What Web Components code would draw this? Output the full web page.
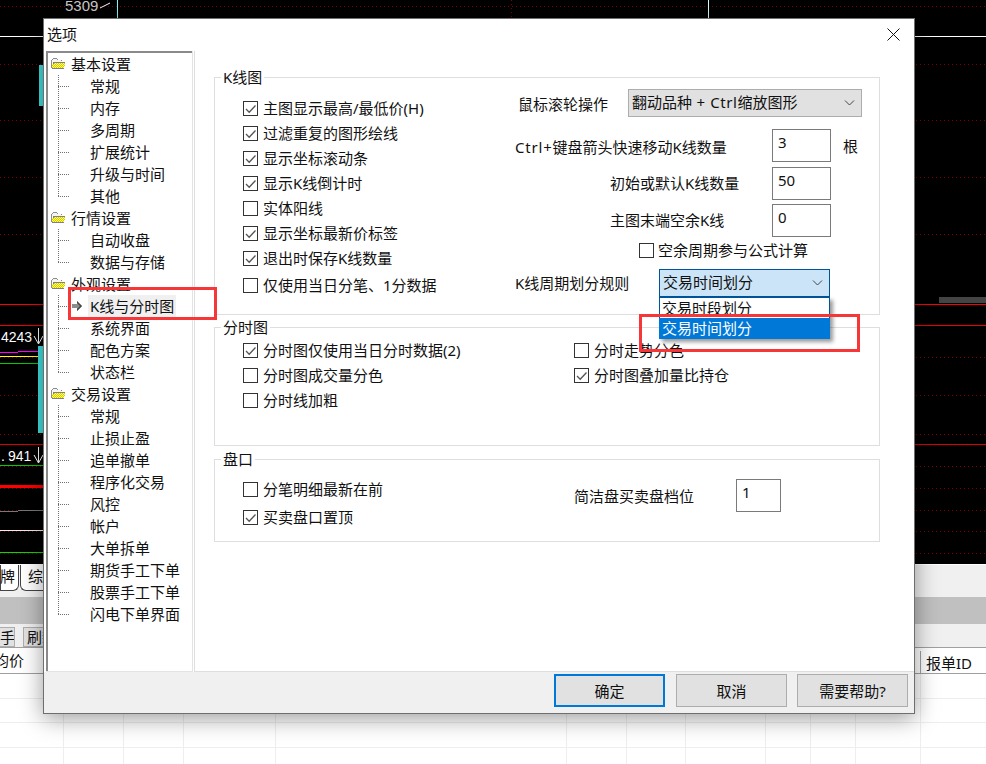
<!DOCTYPE html>
<html lang="zh">
<head>
<meta charset="utf-8">
<title>选项</title>
<style>
	html, body {
		margin: 0;
		height: 764px;
		overflow: hidden;
		background: #fff;
		color: #111;
		font: 15px/22px "Noto Sans", "Noto Sans CJK SC", sans-serif;
	}
</style>
</head>
<body>
<app-backdrop></app-backdrop>

<options-dialog>
	<tree-group label="基本设置">
		<tree-item>常规</tree-item>
		<tree-item>内存</tree-item>
		<tree-item>多周期</tree-item>
		<tree-item>扩展统计</tree-item>
		<tree-item>升级与时间</tree-item>
		<tree-item>其他</tree-item>
	</tree-group>
	<tree-group label="行情设置">
		<tree-item>自动收盘</tree-item>
		<tree-item>数据与存储</tree-item>
	</tree-group>
	<tree-group label="外观设置">
		<tree-item selected>K线与分时图</tree-item>
		<tree-item>系统界面</tree-item>
		<tree-item>配色方案</tree-item>
		<tree-item>状态栏</tree-item>
	</tree-group>
	<tree-group label="交易设置">
		<tree-item>常规</tree-item>
		<tree-item>止损止盈</tree-item>
		<tree-item>追单撤单</tree-item>
		<tree-item>程序化交易</tree-item>
		<tree-item>风控</tree-item>
		<tree-item>帐户</tree-item>
		<tree-item>大单拆单</tree-item>
		<tree-item>期货手工下单</tree-item>
		<tree-item>股票手工下单</tree-item>
		<tree-item>闪电下单界面</tree-item>
	</tree-group>

	<opt-group slot="pane" label="K线图" style="--h: 248px">
		<kline-options></kline-options>
	</opt-group>
	<opt-group slot="pane" label="分时图" style="--h: 129px; --gap: 2px">
		<div style="display: grid; grid-template-columns: 331px 1fr; grid-auto-rows: 25px; padding-top: 1px">
			<opt-check checked>分时图仅使用当日分时数据(2)</opt-check>
			<opt-check>分时走势分色</opt-check>
			<opt-check>分时图成交量分色</opt-check>
			<opt-check checked>分时图叠加量比持仓</opt-check>
			<opt-check>分时线加粗</opt-check>
		</div>
	</opt-group>
	<opt-group slot="pane" label="盘口" style="--h: 93px; --gap: 3px">
		<div style="display: flex; align-items: flex-start">
			<div style="width: 331px; display: grid; grid-auto-rows: 28px; padding-top: 8px">
				<opt-check>分笔明细最新在前</opt-check>
				<opt-check checked>买卖盘口置顶</opt-check>
			</div>
			<div style="display: flex; align-items: center; padding-top: 10px">
				<span style="width: 162px">简洁盘买卖盘档位</span>
				<num-box style="--w: 45px">1</num-box>
			</div>
		</div>
	</opt-group>

	<dlg-button slot="footer" primary>确定</dlg-button>
	<dlg-button slot="footer">取消</dlg-button>
	<dlg-button slot="footer">需要帮助?</dlg-button>
</options-dialog>

<mark-box style="--x: 68px; --y: 287px; --w: 149px; --h: 33px"></mark-box>
<mark-box style="--x: 639px; --y: 314px; --w: 221px; --h: 38px"></mark-box>

<script>
const CHEVRON = `<svg width="11" height="6" viewBox="0 0 11 6"><path d="M1 .5l4.5 4.5L10 .5" fill="none" stroke="#444" stroke-width="1"/></svg>`;

class AppBackdrop extends HTMLElement {
	constructor() {
		super();
		const dotted = [6, 64, 120, 177, 234, 357, 395, 434, 466, 488, 510, 531, 553];
		const solid = [
			[0, 986, 36, '#fff', 1], [0, 986, 304, '#f00', 1], [0, 986, 325, '#e00', 1], [0, 986, 444.5, '#d00', 1],
			[0, 18, 352, '#f0f', 1], [18, 44, 351, '#f0f', 1], [0, 44, 356.5, '#ff0', 1], [0, 44, 363.5, '#0c0', 1],
			[0, 44, 465, '#0c0', 1], [0, 44, 486.5, '#f00', 3], [0, 18, 511, '#777', 1], [18, 44, 510, '#777', 1],
			[0, 44, 530, '#eee', 1], [0, 44, 552.5, '#0d0', 1]
		];
		const gridX = [63, 123, 183, 275, 566, 626, 685, 765, 810, 855, 920];
		const gridY = [24, 48, 73];
		this.attachShadow({ mode: 'open' }).innerHTML = `
			<style>
				:host { display: block; height: 764px; }
				svg { display: block; }
				.tabs { display: flex; height: 33px; background: #f0f0f0; border-top: 1px solid #fff; box-sizing: border-box; overflow: hidden; }
				.tab { height: 25px; background: #fff; border: 1px solid #444; border-top: 0; border-radius: 0 0 6px 0; padding: 0 3px 0 0; text-indent: -1px; }
				.tab + .tab { margin-left: 1px; padding-left: 8px; border-radius: 0 0 0 6px; width: 40px; border-right: 0; }
				.bar { height: 27px; background: #c0c0c0; }
				.tools { display: flex; gap: 8px; height: 24px; padding-top: 3px; box-sizing: border-box; background: #f0f0f0; border-bottom: 1px solid #a0a0a0; }
				.tools span { height: 20px; line-height: 18px; width: 40px; background: #e1e1e1; border: 1px solid #adadad; box-sizing: border-box; padding-left: 3px; overflow: hidden; }
				.tools span:first-child { width: 15px; margin-left: 0; padding-left: 0; border-left: 0; }
				.head { display: flex; height: 26px; line-height: 25px; box-sizing: border-box; background: #fff; border-bottom: 1px solid #a0a0a0; }
				.head span:first-child { margin-left: -6px; width: 926px; }
				.head span:last-child { border-left: 1px solid #a0a0a0; height: 22px; line-height: 24px; margin-top: 3px; padding-left: 5px; }
			</style>
			<svg width="986" height="564" viewBox="0 0 986 564" shape-rendering="crispEdges">
				<rect width="986" height="564" fill="#000"/>
				${dotted.map(y => `<line x1="0" x2="986" y1="${y + .5}" y2="${y + .5}" stroke="#800000" stroke-dasharray="1 3"/>`).join('')}
				<line x1="511.5" x2="511.5" y1="0" y2="18" stroke="#800000" stroke-dasharray="1 3"/>
				${solid.map(([a, b, y, c, w]) => `<line x1="${a}" x2="${b}" y1="${y}" y2="${y}" stroke="${c}" stroke-width="${w}"/>`).join('')}
				<rect x="939" y="297" width="47" height="6" fill="#444"/>
				<rect x="39" y="65" width="5" height="41" fill="#40e0e0"/>
				<rect x="38" y="346" width="6" height="87" fill="#40e0e0"/>
				<line x1="117.5" x2="117.5" y1="0" y2="19" stroke="#7ff"/>
				<line x1="708.5" x2="708.5" y1="0" y2="19" stroke="#dff"/>
				<g font-family="Liberation Sans, sans-serif" font-size="14" fill="#fff">
					<text x="65" y="11" fill="#ccc" font-size="15">5309</text>
					<text x="1" y="342">4243</text>
					<text x="1" y="461">.</text>
					<text x="8" y="461">941</text>
				</g>
				<g shape-rendering="auto" fill="none" stroke="#fff">
					<path d="M100 8l10-5"/>
					<path d="M38.500 328v16M34 336l4.500 8 4.500-8"/>
					<path d="M38.500 447v16M34 455l4.500 8 4.500-8"/>
				</g>
			</svg>
			<div class="tabs"><div class="tab">牌</div><div class="tab">综</div></div>
			<div class="bar"></div>
			<div class="tools"><span>手</span><span>刷新</span></div>
			<div class="head"><span>均价</span><span>报单ID</span></div>
			<svg width="986" height="90" viewBox="0 0 986 90" shape-rendering="crispEdges">
				${gridX.map(x => `<line x1="${x + .5}" x2="${x + .5}" y1="0" y2="90" stroke="#eee"/>`).join('')}
				${gridY.map(y => `<line x1="0" x2="986" y1="${y + .5}" y2="${y + .5}" stroke="#eee"/>`).join('')}
			</svg>
		`;
	}
}

class OptionsDialog extends HTMLElement {
	constructor() {
		super();
		this.attachShadow({ mode: 'open' }).innerHTML = `
			<style>
				:host {
					position: absolute;
					left: 43px;
					top: 18px;
					width: 872px;
					height: 696px;
					box-sizing: border-box;
					display: flex;
					flex-direction: column;
					background: #fff;
					border: 1px solid #6e6e6e;
					box-shadow: 0 4px 22px rgba(0, 0, 0, .4);
				}
				.title { display: flex; justify-content: space-between; align-items: center; height: 32px; padding: 0 14px 2px 3px; box-sizing: border-box; }
				.title svg { display: block; }
				.body { flex: 1; display: flex; min-height: 0; padding-left: 2px; }
				.tree {
					width: 147px;
					box-sizing: border-box;
					padding-top: 2px;
					border: 1px solid #e3e3e3;
					border-width: 0 1px 1px 0;
					box-shadow: inset 2px 2px 0 #8a8a8a;
				}
				.pane {
					flex: 1;
					box-sizing: border-box;
					margin-left: 1px;
					border-left: 1px solid #dedede;
					border-bottom: 1px solid #dedede;
					padding: 16px 34px 0 19px;
				}
				.footer {
					height: 41px;
					box-sizing: border-box;
					display: flex;
					justify-content: flex-end;
					gap: 10px;
					padding: 2px 6px 0 0;
					background: #f0f0f0;
				}
			</style>
			<div class="title">
				<span>选项</span>
				<svg width="13" height="13" viewBox="0 0 13 13"><path d="M.5.5l12 12M12.500.5l-12 12" stroke="#111" fill="none"/></svg>
			</div>
			<div class="body">
				<div class="tree"><slot></slot></div>
				<div class="pane"><slot name="pane"></slot></div>
			</div>
			<div class="footer"><slot name="footer"></slot></div>
		`;
	}
}

class TreeGroup extends HTMLElement {
	constructor() {
		super();
		this.attachShadow({ mode: 'open' }).innerHTML = `
			<style>
				:host { display: block; }
				.row { display: flex; align-items: center; height: 22px; padding-left: 5px; }
				svg { display: block; margin-right: 6px; }
			</style>
			<div class="row">
				<svg width="14" height="12" viewBox="0 0 14 12" shape-rendering="crispEdges">
					<defs><pattern id="dither" width="2" height="2" patternUnits="userSpaceOnUse"><rect width="2" height="2" fill="#ffff66"/><rect width="1" height="1" fill="#d8c800"/><rect x="1" y="1" width="1" height="1" fill="#d8c800"/></pattern></defs>
					<path d="M1 1h5v1h5v2H1z" fill="#f4f4f4"/>
					<path d="M2 0h4v1h1v1h4v1h-1V2H6V1H2v1H1v8H0V2h1V1h1z" fill="#8c8c8c"/>
					<path d="M3 4h11v1l-1 6H1V7z" fill="url(#dither)"/>
					<path d="M2 4h12v1H3v1H2zM1 10h12v1H1z" fill="#808080"/>
				</svg>
				<span>${this.getAttribute('label')}</span>
			</div>
			<slot></slot>
		`;
	}
}

class TreeItem extends HTMLElement {
	constructor() {
		super();
		const arrow = this.hasAttribute('selected')
			? `<svg width="11" height="10" viewBox="0 0 11 10"><path d="M0 3h5V0l5 5-5 5V7H0z" fill="#8c8c8c"/><path d="M5 0l5 5-5 5V8l3-3-3-3z" fill="#444"/></svg>`
			: '';
		this.attachShadow({ mode: 'open' }).innerHTML = `
			<style>
				:host {
					display: block;
					--dots: #707070;
					background:
						repeating-linear-gradient(to right, var(--dots) 0 1px, transparent 1px 2px) 12px 11px / 11px 1px no-repeat,
						repeating-linear-gradient(to bottom, var(--dots) 0 1px, transparent 1px 2px) 12px 0 / 1px 100% no-repeat;
				}
				:host(:last-child) {
					background:
						repeating-linear-gradient(to right, var(--dots) 0 1px, transparent 1px 2px) 12px 11px / 11px 1px no-repeat,
						repeating-linear-gradient(to bottom, var(--dots) 0 1px, transparent 1px 2px) 12px 0 / 1px 12px no-repeat;
				}
				.row { display: flex; align-items: center; height: 22px; padding-left: 26px; }
				.icon { width: 16px; display: flex; }
				.text { padding: 0 2px; }
				:host([selected]) .text { background: #f0f0f0; height: 23px; line-height: 23px; }
			</style>
			<div class="row"><span class="icon">${arrow}</span><span class="text"><slot></slot></span></div>
		`;
	}
}

class OptGroup extends HTMLElement {
	constructor() {
		super();
		this.attachShadow({ mode: 'open' }).innerHTML = `
			<style>
				:host { display: block; margin-top: var(--gap, 0); }
				fieldset {
					height: var(--h);
					box-sizing: border-box;
					margin: 0;
					padding: 0 0 0 28px;
					border: 1px solid #dedede;
					min-width: 0;
				}
				legend { padding: 0 2px; margin-left: -22px; line-height: 20px; }
			</style>
			<fieldset><legend>${this.getAttribute('label')}</legend><slot></slot></fieldset>
		`;
	}
}

class OptCheck extends HTMLElement {
	constructor() {
		super();
		const tick = this.hasAttribute('checked') ? `<path d="M3 8l3.200 3.200L12.500 4.500" fill="none" stroke="#555" stroke-width="1.300"/>` : '';
		this.attachShadow({ mode: 'open' }).innerHTML = `
			<style>
				:host { display: flex; align-items: center; gap: 5px; height: 25px; white-space: nowrap; }
				svg { flex: none; display: block; }
				span { padding-bottom: var(--text-lift, 2px); }
			</style>
			<svg width="15" height="15" viewBox="0 0 15 15">
				<rect x=".5" y=".5" width="14" height="14" fill="#fff" stroke="#333"/>
				${tick}
			</svg>
			<span><slot></slot></span>
		`;
	}
}

class NumBox extends HTMLElement {
	constructor() {
		super();
		this.attachShadow({ mode: 'open' }).innerHTML = `
			<style>
				:host {
					display: block;
					flex: none;
					width: var(--w, 59px);
					height: 33px;
					box-sizing: border-box;
					border: 1px solid #7a7a7a;
					background: #fff;
					padding: 1px 0 0 5px;
				}
			</style>
			<slot></slot>
		`;
	}
}

class DropSelect extends HTMLElement {
	constructor() {
		super();
		this.attachShadow({ mode: 'open' }).innerHTML = `
			<style>
				:host {
					display: flex;
					align-items: center;
					justify-content: space-between;
					flex: none;
					width: var(--w);
					height: 28px;
					box-sizing: border-box;
					padding: 0 6px 0 3px;
					background: #e1e1e1;
					border: 1px solid #adadad;
					white-space: nowrap;
				}
				:host([open]) { position: relative; background: #cce4f7; border-color: #005499; }
				.value { padding-bottom: 2px; }
				.list {
					display: none;
					position: absolute;
					left: -1px;
					right: -1px;
					top: 27px;
					height: 42px;
					box-sizing: border-box;
					background: #fff;
					border: 1px solid #005499;
					border-bottom: 0;
					box-shadow: 3px 3px 4px rgba(0, 0, 0, .4);
				}
				:host([open]) .list { display: block; }
				.list div { height: 20px; line-height: 20px; padding-left: 2px; }
				.list div + div { height: 21px; background: #0078d7; color: #fff; margin: 0 -1px; padding-left: 3px; }
				svg { display: block; }
			</style>
			<span class="value"><slot></slot></span>
			${CHEVRON}
			<div class="list"><div>交易时段划分</div><div>交易时间划分</div></div>
		`;
	}
}

class KlineOptions extends HTMLElement {
	constructor() {
		super();
		this.attachShadow({ mode: 'open' }).innerHTML = `
			<style>
				:host { display: flex; }
				.left { width: 272px; padding-top: 9px; }
				.left opt-check:last-child { margin-top: 2px; }
				.right { padding-top: 2px; }
				.row { display: flex; align-items: center; white-space: nowrap; }
				.down { padding-top: 2px; }
				.up { padding-bottom: 2px; }
				.wide { letter-spacing: .8px; }
				.wide2 { letter-spacing: .6px; }
			</style>
			<div class="left">
				<opt-check checked>主图显示最高/最低价(H)</opt-check>
				<opt-check checked>过滤重复的图形绘线</opt-check>
				<opt-check checked>显示坐标滚动条</opt-check>
				<opt-check checked>显示K线倒计时</opt-check>
				<opt-check>实体阳线</opt-check>
				<opt-check checked>显示坐标最新价标签</opt-check>
				<opt-check checked>退出时保存K线数量</opt-check>
				<opt-check>仅使用当日分笔、1分数据</opt-check>
			</div>
			<div class="right">
				<div class="row" style="padding-left: 3px">
					<span class="down" style="width: 110px">鼠标滚轮操作</span>
					<drop-select style="--w: 234px">翻动品种<span class="wide2"> + Ctrl</span>缩放图形</drop-select>
				</div>
				<div class="row" style="margin-top: 12px">
					<span class="down" style="width: 257px"><span class="wide">Ctrl+</span>键盘箭头快速移动K线数量</span>
					<num-box>3</num-box>
					<span style="margin-left: 12px">根</span>
				</div>
				<div class="row" style="margin-top: 5px; padding-left: 95px">
					<span class="up" style="width: 162px">初始或默认K线数量</span>
					<num-box>50</num-box>
				</div>
				<div class="row" style="margin-top: 4px; padding-left: 95px">
					<span class="up" style="width: 162px">主图末端空余K线</span>
					<num-box>0</num-box>
				</div>
				<div class="row" style="margin-top: 5px; padding-left: 124px; height: 16px">
					<opt-check style="height: 16px; gap: 4px; --text-lift: 0px">空余周期参与公式计算</opt-check>
				</div>
				<div class="row" style="margin-top: 11px">
					<span style="width: 144px">K线周期划分规则</span>
					<drop-select open style="--w: 171px">交易时间划分</drop-select>
				</div>
			</div>
		`;
	}
}

class DlgButton extends HTMLElement {
	constructor() {
		super();
		this.attachShadow({ mode: 'open' }).innerHTML = `
			<style>
				:host {
					display: flex;
					align-items: center;
					justify-content: center;
					width: 111px;
					height: 33px;
					box-sizing: border-box;
					background: #e1e1e1;
					border: 1px solid #adadad;
				}
				:host([primary]) { border: 2px solid #0078d7; margin-right: 1px; }
			</style>
			<slot></slot>
		`;
	}
}

class MarkBox extends HTMLElement {
	constructor() {
		super();
		this.attachShadow({ mode: 'open' }).innerHTML = `
			<style>
				:host {
					position: absolute;
					left: var(--x);
					top: var(--y);
					width: var(--w);
					height: var(--h);
					box-sizing: border-box;
					border: 3px solid #f73737;
				}
			</style>
		`;
	}
}

customElements.define('app-backdrop', AppBackdrop);
customElements.define('options-dialog', OptionsDialog);
customElements.define('tree-group', TreeGroup);
customElements.define('tree-item', TreeItem);
customElements.define('opt-group', OptGroup);
customElements.define('opt-check', OptCheck);
customElements.define('num-box', NumBox);
customElements.define('drop-select', DropSelect);
customElements.define('kline-options', KlineOptions);
customElements.define('dlg-button', DlgButton);
customElements.define('mark-box', MarkBox);
</script>
</body>
</html>
